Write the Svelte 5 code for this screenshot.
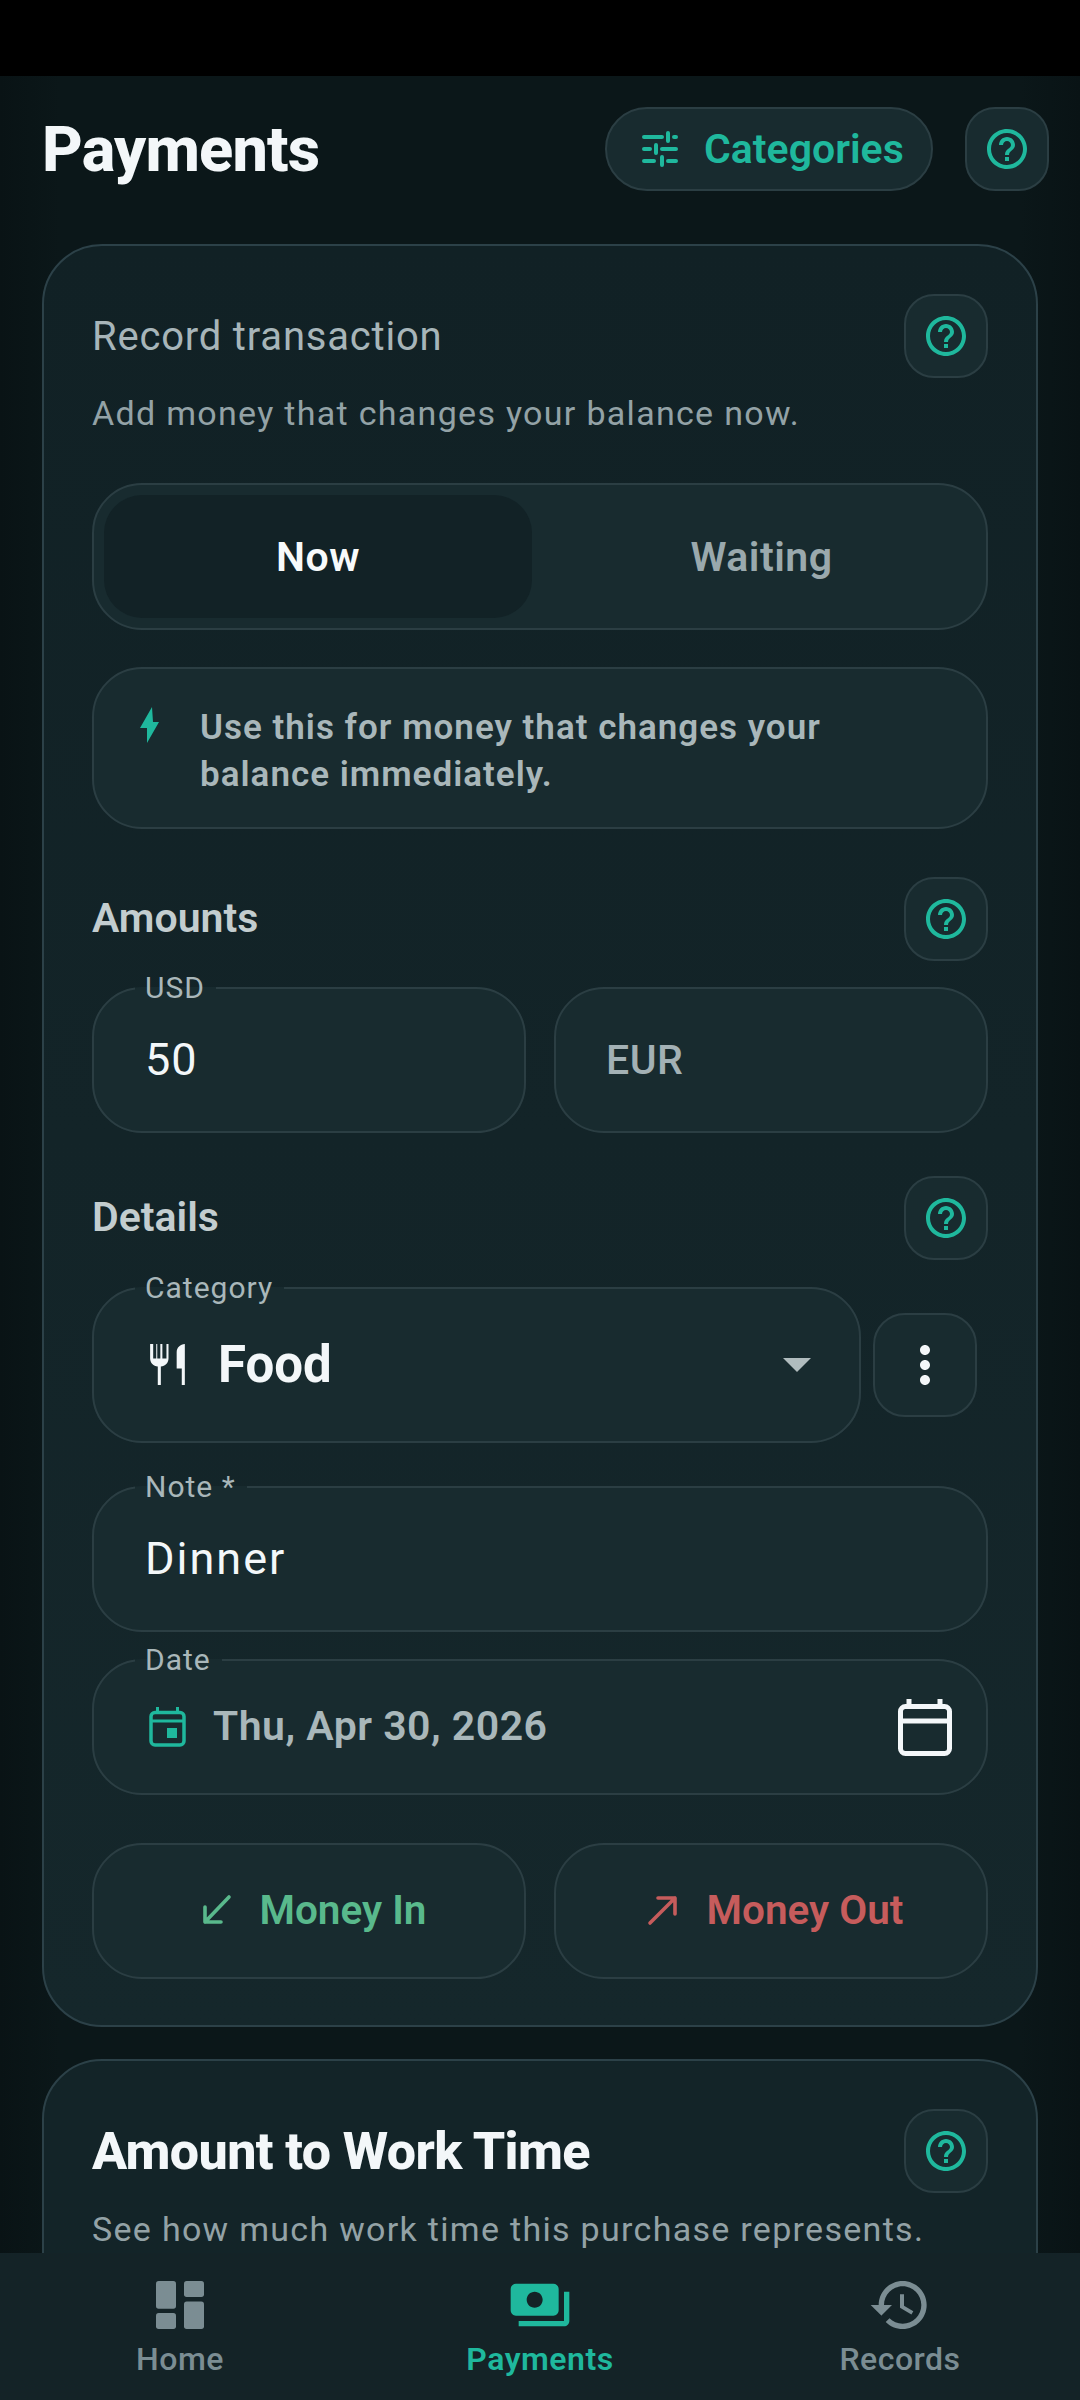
<script>
  const helpPath = 'M11 18h2v-2h-2v2zm1-16C6.48 2 2 6.48 2 12s4.48 10 10 10 10-4.48 10-10S17.52 2 12 2zm0 18c-4.41 0-8-3.59-8-8s3.59-8 8-8 8 3.59 8 8-3.59 8-8 8zm0-14c-2.21 0-4 1.79-4 4h2c0-1.1.9-2 2-2s2 .9 2 2c0 2-3 1.75-3 5h2c0-2.25 3-2.5 3-5 0-2.21-1.79-4-4-4z';
</script>

{#snippet help()}
  <button class="help" aria-label="Help">
    <svg width="48" height="48" viewBox="0 0 24 24"><path d={helpPath} fill="currentColor" /></svg>
  </button>
{/snippet}

<div class="screen">
  <div class="status"></div>

  <main>
    <header>
      <h1>Payments</h1>
      <button class="cat">
        <svg width="48" height="48" viewBox="0 0 24 24" fill="none" stroke="currentColor" stroke-width="2" stroke-linecap="round">
          <path d="M4 6h9M19 6h1M16 4v4M4 12h3M13 12h7M10 10v4M4 18h5M16 18h4M13 16v4" />
        </svg>
        Categories
      </button>
      {@render help()}
    </header>

    <section class="card first">
      <div class="row">
        <h2>Record transaction</h2>
        {@render help()}
      </div>
      <p class="sub">Add money that changes your balance now.</p>

      <div class="seg">
        <button class="active">Now</button>
        <button>Waiting</button>
      </div>

      <div class="info">
        <svg width="20" height="36" viewBox="0 0 20 36"><path d="M12 0 0 21h7l0 15L19 15h-6z" fill="currentColor" /></svg>
        <p>Use this for money that changes your balance immediately.</p>
      </div>

      <div class="row section amounts">
        <h3>Amounts</h3>
        {@render help()}
      </div>
      <div class="pair">
        <fieldset class="field amount">
          <legend>USD</legend>
          <span class="value">50</span>
        </fieldset>
        <div class="field amount nolabel"><span class="hint">EUR</span></div>
      </div>

      <div class="row section details">
        <h3>Details</h3>
        {@render help()}
      </div>
      <div class="catrow">
        <fieldset class="field select">
          <legend>Category</legend>
          <svg class="food" width="49" height="49" viewBox="0 0 24 24"><path d="M11 9H9V2H8v7H6.500V2H6v7H4.500V2H3v7c0 2.120 1.660 3.840 3.750 3.970V22h1.500v-9.030C10.340 12.840 12 11.120 12 9V2h-1v7zM16 6v8h2.500v8H20V2c-2.200 0-4 1.800-4 4z" fill="currentColor" /></svg>
          <span class="foodname">Food</span>
          <span class="caret"></span>
        </fieldset>
        <button class="more" aria-label="More">
          <svg width="60" height="60" viewBox="0 0 24 24"><path d="M12 8c1.100 0 2-.9 2-2s-.9-2-2-2-2 .9-2 2 .9 2 2 2zm0 2c-1.100 0-2 .9-2 2s.9 2 2 2 2-.9 2-2-.9-2-2-2zm0 6c-1.100 0-2 .9-2 2s.9 2 2 2 2-.9 2-2-.9-2-2-2z" fill="currentColor" /></svg>
        </button>
      </div>

      <fieldset class="field note">
        <legend>Note *</legend>
        <span class="value wide">Dinner</span>
      </fieldset>

      <fieldset class="field date">
        <legend>Date</legend>
        <svg class="event" width="38" height="40" viewBox="0 0 38 40" fill="none" stroke="currentColor">
          <rect x="2" y="5.500" width="33" height="32.500" rx="4" stroke-width="3.500" />
          <path d="M2 14h33" stroke-width="3" />
          <path d="M8.500 0v5M28.500 0v5" stroke-width="3" />
          <rect x="18" y="21" width="10" height="10" fill="currentColor" stroke="none" />
        </svg>
        <span class="datetext">Thu, Apr 30, 2026</span>
        <svg class="picker" width="54" height="58" viewBox="0 0 54 58" fill="none" stroke="currentColor" stroke-width="5">
          <rect x="2.500" y="8.500" width="49" height="47" rx="5" />
          <path d="M2 23h50" />
          <path d="M11 1v7M42 1v7" />
        </svg>
      </fieldset>

      <div class="pair actions">
        <button class="action in">
          <svg width="32" height="32" viewBox="0 0 32 32" fill="none" stroke="currentColor" stroke-width="3.600" stroke-linecap="round" stroke-linejoin="round">
            <path d="M29 3 5 28M5 13v15h16" />
          </svg>
          Money In
        </button>
        <button class="action out">
          <svg width="32" height="32" viewBox="0 0 32 32" fill="none" stroke="currentColor" stroke-width="3.600" stroke-linecap="round" stroke-linejoin="round">
            <path d="M3 29 28 4M11 4h17v16" />
          </svg>
          Money Out
        </button>
      </div>
    </section>

    <section class="card second">
      <div class="row">
        <h2 class="strong">Amount to Work Time</h2>
        {@render help()}
      </div>
      <p class="sub tight">See how much work time this purchase represents.</p>
    </section>
  </main>

  <nav>
    <div class="tab">
      <svg width="64" height="64" viewBox="0 0 24 24" fill="currentColor">
        <rect x="3" y="3" width="7.500" height="10.400" rx="1" />
        <rect x="3" y="15" width="7.500" height="6" rx="1" />
        <rect x="13.500" y="3" width="7.500" height="6" rx="1" />
        <rect x="13.500" y="10.700" width="7.500" height="10.300" rx="1" />
      </svg>
      <span>Home</span>
    </div>
    <div class="tab on">
      <svg width="64" height="64" viewBox="0 0 24 24"><path d="M19 14V6c0-1.100-.9-2-2-2H3c-1.100 0-2 .9-2 2v8c0 1.100.9 2 2 2h14c1.100 0 2-.9 2-2zm-9-1c-1.660 0-3-1.340-3-3s1.340-3 3-3 3 1.340 3 3-1.340 3-3 3zm13-6v11c0 1.100-.9 2-2 2H4v-2h17V7h2z" fill="currentColor" /></svg>
      <span>Payments</span>
    </div>
    <div class="tab">
      <svg width="64" height="64" viewBox="0 0 24 24"><path d="M13 3c-4.970 0-9 4.030-9 9H1l3.890 3.890.07.14L9 12H6c0-3.870 3.130-7 7-7s7 3.130 7 7-3.130 7-7 7c-1.930 0-3.680-.79-4.940-2.060l-1.420 1.420C8.270 19.990 10.510 21 13 21c4.970 0 9-4.030 9-9s-4.030-9-9-9zm-1 5v5l4.280 2.540.72-1.210-3.500-2.080V8H12z" fill="currentColor" /></svg>
      <span>Records</span>
    </div>
  </nav>
</div>

<style>
  :global(body) {
    margin: 0;
    background: #000;
  }

  .screen {
    width: 1080px;
    height: 2400px;
    display: flex;
    flex-direction: column;
    overflow: hidden;
    font-family: Roboto, "Liberation Sans", sans-serif;
    color: #f3f7f9;
  }

  .status {
    height: 76px;
    flex: none;
    background: #000;
  }

  main {
    flex: 1;
    min-height: 0;
    overflow: hidden;
    background: linear-gradient(90deg, #091315 0, #0b1719 60px, #0b1719 1020px, #091315 100%);
    padding: 31px 42px 0;
    box-sizing: border-box;
  }

  button {
    font-family: inherit;
    color: inherit;
    margin: 0;
    padding: 0;
    border: 0;
    background: none;
  }

  header {
    display: flex;
    align-items: center;
    height: 84px;
    margin-right: -11px;
    gap: 32px;
  }

  h1 {
    margin: 0 auto 0 0;
    font-size: 63px;
    font-weight: 800;
    letter-spacing: -0.8px;
    line-height: 1;
  }

  .cat {
    height: 84px;
    width: 328px;
    box-sizing: border-box;
    display: flex;
    align-items: center;
    gap: 20px;
    padding-left: 29px;
    border: 2px solid #2b3e43;
    border-radius: 42px;
    background: #182b2f;
    color: #1fb89d;
    font-size: 41px;
    font-weight: 600;
    white-space: nowrap;
  }

  .help {
    width: 84px;
    height: 84px;
    flex: none;
    box-sizing: border-box;
    display: flex;
    align-items: center;
    justify-content: center;
    border: 2px solid #2b3e43;
    border-radius: 30px;
    background: #182b2f;
    color: #1fb89d;
  }

  .card {
    border: 2px solid #2c4148;
    border-radius: 60px;
    background: linear-gradient(180deg, #112125, #15272b);
    padding: 48px 48px 46px;
    box-sizing: border-box;
    width: 996px;
  }

  .first {
    margin-top: 53px;
  }

  .second {
    margin-top: 32px;
    height: 420px;
    background: #132428;
  }

  .row {
    display: flex;
    align-items: center;
    justify-content: space-between;
  }

  h2 {
    margin: 0;
    font-size: 40px;
    font-weight: 400;
    letter-spacing: 0.8px;
    color: #a7b5b9;
  }

  h2.strong {
    font-size: 52px;
    font-weight: 800;
    letter-spacing: -0.6px;
    color: #f3f7f9;
  }

  h3 {
    margin: 0 0 2px;
    font-size: 41px;
    font-weight: 600;
    color: #c3cdcf;
  }

  .sub {
    margin: 13px 0 0;
    font-size: 34px;
    line-height: 44px;
    letter-spacing: 1.300px;
    color: #93a2a6;
  }

  .sub.tight {
    margin-top: 14px;
  }

  .seg {
    margin-top: 48px;
    height: 147px;
    box-sizing: border-box;
    display: flex;
    padding: 10px;
    border: 2px solid #2b3e43;
    border-radius: 50px;
    background: #182b2f;
  }

  .seg button {
    flex: 1;
    font-size: 41px;
    font-weight: 600;
    letter-spacing: 0.5px;
    color: #9aa9ad;
    border-radius: 38px;
  }

  .seg .active {
    flex: 0 0 428px;
    background: #122226;
    color: #f7fafb;
  }

  .seg .active + button {
    padding-left: 15px;
  }

  .info {
    margin-top: 37px;
    height: 162px;
    box-sizing: border-box;
    display: flex;
    gap: 40px;
    padding: 39px 120px 0 46px;
    border: 2px solid #2b3e43;
    border-radius: 50px;
    background: #182b2f;
    color: #1fb89d;
  }

  .info svg {
    flex: none;
    margin-top: -1px;
  }

  .info p {
    margin: -4px 0 0;
    font-size: 35px;
    line-height: 47px;
    font-weight: 600;
    letter-spacing: 1px;
    color: #a9b7ba;
  }

  .section.amounts {
    margin-top: 48px;
  }

  .section.details {
    margin-top: 43px;
  }

  .pair {
    display: grid;
    grid-template-columns: 1fr 1fr;
    gap: 28px;
  }

  .field {
    margin: 0;
    min-width: 0;
    box-sizing: border-box;
    border: 2px solid #2b3e43;
    border-radius: 50px;
    background: #182b2f;
    padding: 0 50px;
    display: flex;
    align-items: center;
  }

  legend {
    margin-left: -9px;
    padding: 0 11px 0 10px;
    font-size: 30px;
    line-height: 32px;
    letter-spacing: 1px;
    color: #a9b7ba;
  }

  .amount {
    height: 161px;
    margin-top: 11px;
  }

  .nolabel {
    height: 146px;
    margin-top: 26px;
  }

  .value {
    font-size: 45px;
    letter-spacing: 1px;
    margin-bottom: 16px;
    margin-left: 1px;
  }

  .value.wide {
    letter-spacing: 2px;
  }

  .hint {
    font-size: 41px;
    font-weight: 500;
    letter-spacing: 0.5px;
    color: #a3b1b5;
  }

  .catrow {
    display: flex;
    align-items: flex-start;
    gap: 12px;
    margin-top: 12px;
  }

  .select {
    width: 769px;
    height: 171px;
    flex: none;
    gap: 25px;
    padding-right: 48px;
  }

  .food {
    flex: none;
    margin: 0 0 16px 0;
  }

  .foodname {
    font-size: 51px;
    font-weight: 700;
    margin-bottom: 16px;
  }

  .caret {
    margin: 0 0 16px auto;
    width: 0;
    height: 0;
    border-left: 14px solid transparent;
    border-right: 14px solid transparent;
    border-top: 14px solid #b0bcbe;
  }

  .more {
    width: 104px;
    height: 104px;
    flex: none;
    margin-top: 41px;
    box-sizing: border-box;
    display: flex;
    align-items: center;
    justify-content: center;
    border: 2px solid #2b3e43;
    border-radius: 32px;
    background: #182b2f;
    color: #f3f7f9;
  }

  .note {
    height: 161px;
    margin-top: 28px;
  }

  .date {
    height: 151px;
    margin-top: 12px;
    gap: 26px;
    padding-right: 34px;
  }

  .event {
    flex: none;
    color: #1fb89d;
    margin-bottom: 16px;
    margin-left: 5px;
  }

  .datetext {
    font-size: 41px;
    font-weight: 600;
    letter-spacing: 0.5px;
    color: #a9b7ba;
    margin-bottom: 18px;
  }

  .picker {
    margin: 0 0 16px auto;
    flex: none;
  }

  .actions {
    margin-top: 48px;
  }

  .action {
    height: 136px;
    display: flex;
    align-items: center;
    justify-content: center;
    gap: 28px;
    padding: 0 0 3px 8px;
    border: 2px solid #2b3e43;
    border-radius: 50px;
    background: #182b2f;
    font-size: 40.500px;
    font-weight: 600;
  }

  .in {
    color: #59b98c;
  }

  .out {
    color: #c65c5c;
  }

  nav {
    height: 147px;
    flex: none;
    display: grid;
    grid-template-columns: repeat(3, 1fr);
    background: #142327;
  }

  .tab {
    display: flex;
    flex-direction: column;
    align-items: center;
    padding-top: 20px;
    color: #7b8d93;
    font-size: 32px;
    font-weight: 500;
  }

  .tab span {
    margin-top: 3px;
    letter-spacing: 0.5px;
  }

  .tab.on {
    color: #1fb89d;
  }

  .tab.on span {
    font-weight: 600;
  }
</style>
